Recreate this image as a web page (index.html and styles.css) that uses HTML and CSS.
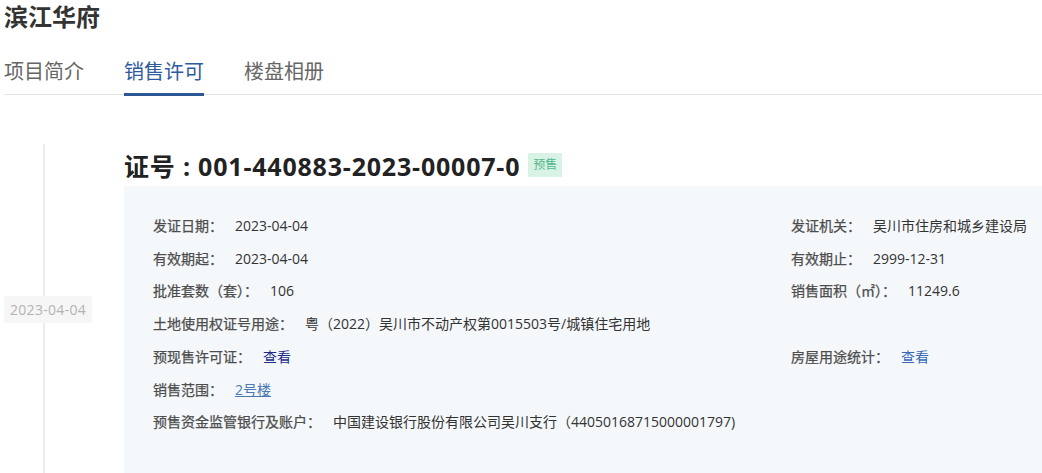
FILE: index.html
```html
<!DOCTYPE html>
<html lang="zh-CN">
<head>
  <meta charset="UTF-8" />
  <meta name="viewport" content="width=device-width, initial-scale=1.0"/>
  <title>滨江华府 | 销售许可</title>
  <link rel="stylesheet" href="styles.css">
</head>
<body>

  <div class="cabecera">
    <h1 class="titulo">滨江华府</h1>
    <div class="tabs">
      <a class="tab">项目简介</a>
      <a class="tab activo">销售许可</a>
      <a class="tab">楼盘相册</a>
    </div>
  </div>

  <div class="linea-tiempo">
    <div class="item">
      <div class="fecha-col">
        <span class="fecha">2023-04-04</span>
      </div>
      <div class="contenido">
        <div class="cert-titulo">
          <h2>证号 : 001-440883-2023-00007-0</h2>
          <span class="badge">预售</span>
        </div>
        <div class="panel">
          <div class="fila"><span class="etq">发证日期：</span><span class="val">2023-04-04</span></div>
          <div class="fila"><span class="etq">发证机关：</span><span class="val">吴川市住房和城乡建设局</span></div>
          <div class="fila"><span class="etq">有效期起：</span><span class="val">2023-04-04</span></div>
          <div class="fila"><span class="etq">有效期止：</span><span class="val">2999-12-31</span></div>
          <div class="fila"><span class="etq">批准套数（套）：</span><span class="val">106</span></div>
          <div class="fila"><span class="etq">销售面积（㎡）：</span><span class="val">11249.6</span></div>
          <div class="fila completa"><span class="etq">土地使用权证号用途：</span><span class="val">粤（2022）吴川市不动产权第0015503号/城镇住宅用地</span></div>
          <div class="fila"><span class="etq">预现售许可证：</span><a class="val enlace visitado">查看</a></div>
          <div class="fila"><span class="etq">房屋用途统计：</span><a class="val enlace">查看</a></div>
          <div class="fila completa"><span class="etq">销售范围：</span><a class="val enlace subrayado">2号楼</a></div>
          <div class="fila completa"><span class="etq">预售资金监管银行及账户：</span><span class="val">中国建设银行股份有限公司吴川支行（44050168715000001797)</span></div>
        </div>
      </div>
    </div>
  </div>

</body>
</html>
```

FILE: styles.css
```css
body {
  font-family: "Open Sans", "Noto Sans CJK SC", sans-serif;
  background-color: #fff;
  margin: 0;
  color: #333;
  overflow: hidden;
}

.cabecera {
  padding-left: 4px;
}

.titulo {
  margin: 0;
  padding-top: 1px;
  font-size: 24px;
  line-height: 32px;
  font-weight: bold;
  color: #333;
}

.tabs {
  display: flex;
  gap: 40px;
  margin-top: 20px;
  border-bottom: 1px solid #e4e4e4;
}

.tab {
  font-size: 20px;
  line-height: 38px;
  color: #666;
  padding-bottom: 2px;
  border-bottom: 3px solid transparent;
  margin-bottom: -2px;
  cursor: pointer;
}

.tab.activo {
  color: #2d5b9c;
  border-bottom-color: #2b5797;
}

.linea-tiempo {
  margin-top: 49px;
}

.item {
  display: flex;
}

.fecha-col {
  position: relative;
  width: 124px;
  flex-shrink: 0;
  display: flex;
  align-items: center;
}

.fecha-col::before {
  content: "";
  position: absolute;
  left: 43px;
  top: 0;
  bottom: 0;
  width: 2px;
  background-color: #ececec;
}

.fecha {
  position: relative;
  margin-left: 4px;
  padding: 0 6px;
  font-size: 14px;
  line-height: 27px;
  letter-spacing: 0.3px;
  color: #b3b3b3;
  background-color: #f6f6f6;
}

.contenido {
  flex: 1;
}

.cert-titulo {
  display: flex;
  align-items: center;
  gap: 8px;
  height: 38px;
  padding-top: 2px;
}

.cert-titulo h2 {
  margin: 0;
  font-size: 25px;
  letter-spacing: 0.8px;
  font-weight: bold;
  color: #222;
}

.badge {
  font-size: 12px;
  line-height: 24px;
  padding: 0 5px;
  color: #52b68a;
  background-color: #d8f3e6;
}

.panel {
  background-color: #f5f8fb;
  margin-top: 2px;
  padding: 24px 0 36px 29px;
  display: grid;
  grid-template-columns: 638px 1fr;
}

.fila {
  font-size: 14px;
  line-height: 32.7px;
  white-space: nowrap;
}

.fila.completa {
  grid-column: 1 / -1;
}

.etq {
  color: #4d4d4d;
  -webkit-text-stroke: 0.25px #4d4d4d;
}

.val {
  margin-left: 12px;
  color: #333;
}

.enlace {
  color: #3867b8;
  cursor: pointer;
}

.enlace.visitado {
  color: #1c2a8a;
}

.enlace.subrayado {
  color: #4a78b4;
  text-decoration: underline;
}
```
